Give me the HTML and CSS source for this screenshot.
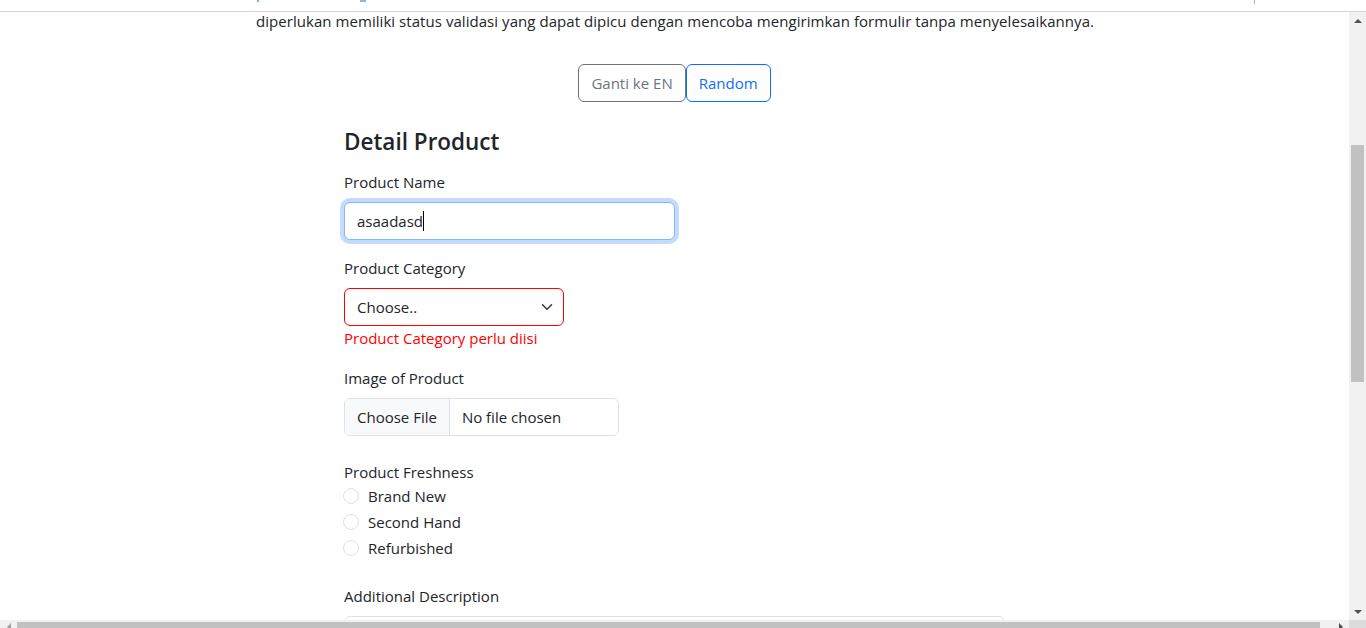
FILE: index.html
```html
<!DOCTYPE html>
<html lang="id">
<head>
<meta charset="utf-8">
<title>Detail Product</title>
<link rel="stylesheet" href="styles.css">
</head>
<body>
<div class="topbar">
  <span class="frag frag-green"></span>
  <span class="frag frag-blue"></span>
  <span class="frag frag-gray"></span>
</div>
<div class="viewport">
  <main class="page">
    <p class="intro">diperlukan memiliki status validasi yang dapat dipicu dengan mencoba mengirimkan formulir tanpa menyelesaikannya.</p>
    <div class="btn-row">
      <button class="btn btn-secondary" type="button">Ganti ke EN</button>
      <button class="btn btn-primary" type="button">Random</button>
    </div>
    <form class="form">
      <h4 class="title">Detail Product</h4>
      <div class="field">
        <label class="label">Product Name</label>
        <div class="control control-name is-focus"><span class="value">asaadasd</span><span class="caret"></span></div>
      </div>
      <div class="field field-tight">
        <label class="label">Product Category</label>
        <div class="control control-select is-invalid">
          <span class="value">Choose..</span>
          <svg class="chev" width="16" height="12" viewBox="0 0 16 16"><path d="m2 5 6 6 6-6" fill="none" stroke="#343a40" stroke-width="2" stroke-linecap="round" stroke-linejoin="round"/></svg>
        </div>
        <div class="feedback">Product Category perlu diisi</div>
      </div>
      <div class="field field-file">
        <label class="label">Image of Product</label>
        <div class="control control-file">
          <span class="file-btn">Choose File</span>
          <span class="file-name">No file chosen</span>
        </div>
      </div>
      <div class="field field-radio">
        <label class="label label-radio">Product Freshness</label>
        <div class="check"><span class="radio"></span><span>Brand New</span></div>
        <div class="check"><span class="radio"></span><span>Second Hand</span></div>
        <div class="check"><span class="radio"></span><span>Refurbished</span></div>
      </div>
      <div class="field">
        <label class="label">Additional Description</label>
        <div class="control control-area"></div>
      </div>
    </form>
  </main>
  <div class="vscroll">
    <div class="arrow-btn"><span class="tri tri-up"></span></div>
    <div class="vtrack"><div class="vthumb"></div></div>
    <div class="arrow-btn"><span class="tri tri-down"></span></div>
  </div>
</div>
<div class="hscroll">
  <div class="harrow"><span class="tri tri-left"></span></div>
  <div class="htrack"><div class="hthumb"></div></div>
  <div class="harrow"><span class="tri tri-right"></span></div>
  <div class="corner"></div>
</div>
</body>
</html>
```

FILE: styles.css
```css
* { box-sizing: border-box; }
html, body { margin: 0; padding: 0; }
body {
  width: 1366px;
  height: 628px;
  overflow: hidden;
  display: flex;
  flex-direction: column;
  background: #fff;
  color: #212529;
  font-family: "Open Sans", "Noto Sans", sans-serif;
  font-size: 15px;
}
.topbar {
  height: 12px;
  flex: none;
  border-bottom: 1px solid #d4d4d4;
  display: flex;
  align-items: flex-start;
}
.frag { display: block; height: 2px; }
.frag-green { width: 2px; background: #7ac27a; margin-left: 257px; }
.frag-blue { width: 6px; background: #8fb4e8; margin-left: 101px; }
.frag-gray { width: 1px; height: 4px; background: #b0b0b0; margin-left: 888px; }

.viewport {
  height: 608px;
  flex: none;
  display: flex;
}
.page {
  flex: 1;
  overflow: hidden;
  display: flex;
  flex-direction: column;
}
.intro {
  margin: 0 0 0 256px;
  line-height: 18px;
  font-size: 15px;
  letter-spacing: 0.05px;
  white-space: nowrap;
}
.btn-row {
  display: flex;
  justify-content: center;
  margin-top: 34px;
}
.btn {
  height: 38px;
  padding: 0 12px;
  background: #fff;
  border: 1px solid;
  border-radius: 6px;
  font-family: inherit;
  font-size: 15px;
  line-height: 36px;
}
.btn-secondary { color: #6c757d; border-color: #6c757d; }
.btn-primary { color: #0d6efd; border-color: #0d6efd; }

.form {
  width: 661px;
  margin: 25px auto 0;
  display: flex;
  flex-direction: column;
}
.title {
  margin: 0;
  font-size: 22.5px;
  font-weight: 600;
  line-height: 29px;
}
.field {
  display: flex;
  flex-direction: column;
  margin-top: 14px;
}
.field-tight { margin-top: 16px; }
.field-file { margin-top: 16px; }
.field-radio { margin-top: 24px; }
.label {
  line-height: 24px;
  margin-bottom: 8px;
}
.label-radio { margin-bottom: 0; }
.control {
  height: 38px;
  border: 1px solid #dee2e6;
  border-radius: 6px;
  display: flex;
  align-items: center;
  padding: 0 12px;
  background: #fff;
}
.control-name { width: 331px; }
.is-focus {
  border-color: #86b7fe;
  box-shadow: 0 0 0 4px rgba(13, 110, 253, 0.25);
}
.caret {
  width: 1px;
  height: 20px;
  background: #000;
}
.control-select {
  width: 220px;
  justify-content: space-between;
}
.is-invalid { border-color: #ff0000; }
.chev { margin-right: -4px; }
.feedback {
  color: #ff0000;
  line-height: 24px;
}
.control-file {
  width: 275px;
  padding: 0;
  overflow: hidden;
}
.file-btn {
  height: 100%;
  display: flex;
  align-items: center;
  padding: 0 12px;
  background: #f8f9fa;
  border-right: 1px solid #dee2e6;
}
.file-name { padding-left: 12px; }
.check {
  display: flex;
  align-items: center;
  gap: 9px;
  height: 24px;
  margin-bottom: 2px;
  margin-left: -1px;
}
.radio {
  width: 16px;
  height: 16px;
  border: 1px solid #dee2e6;
  border-radius: 50%;
}
.field-radio + .field { margin-top: 22px; }
.control-area {
  width: 661px;
  height: 62px;
  flex: none;
}

.vscroll {
  width: 17px;
  flex: none;
  background: #f1f1f1;
  display: flex;
  flex-direction: column;
}
.arrow-btn {
  height: 17px;
  display: flex;
  align-items: center;
  justify-content: center;
}
.vtrack { flex: 1; padding: 116px 2px 0; }
.vthumb { height: 237px; background: #c1c1c1; }
.tri { width: 0; height: 0; border: 4px solid transparent; }
.tri-up { border-bottom-color: #505050; border-top-width: 0; }
.tri-down { border-top-color: #505050; border-bottom-width: 0; }
.tri-left { border-right-color: #a3a3a3; border-left-width: 0; }
.tri-right { border-left-color: #505050; border-right-width: 0; }

.hscroll {
  height: 8px;
  flex: none;
  display: flex;
  background: #f1f1f1;
}
.harrow {
  width: 17px;
  display: flex;
  justify-content: center;
  padding-top: 3px;
}
.htrack { flex: 1; padding-top: 2px; }
.hthumb { width: 1303px; height: 100%; background: #c1c1c1; }
.corner { width: 17px; background: #dcdcdc; }
```
